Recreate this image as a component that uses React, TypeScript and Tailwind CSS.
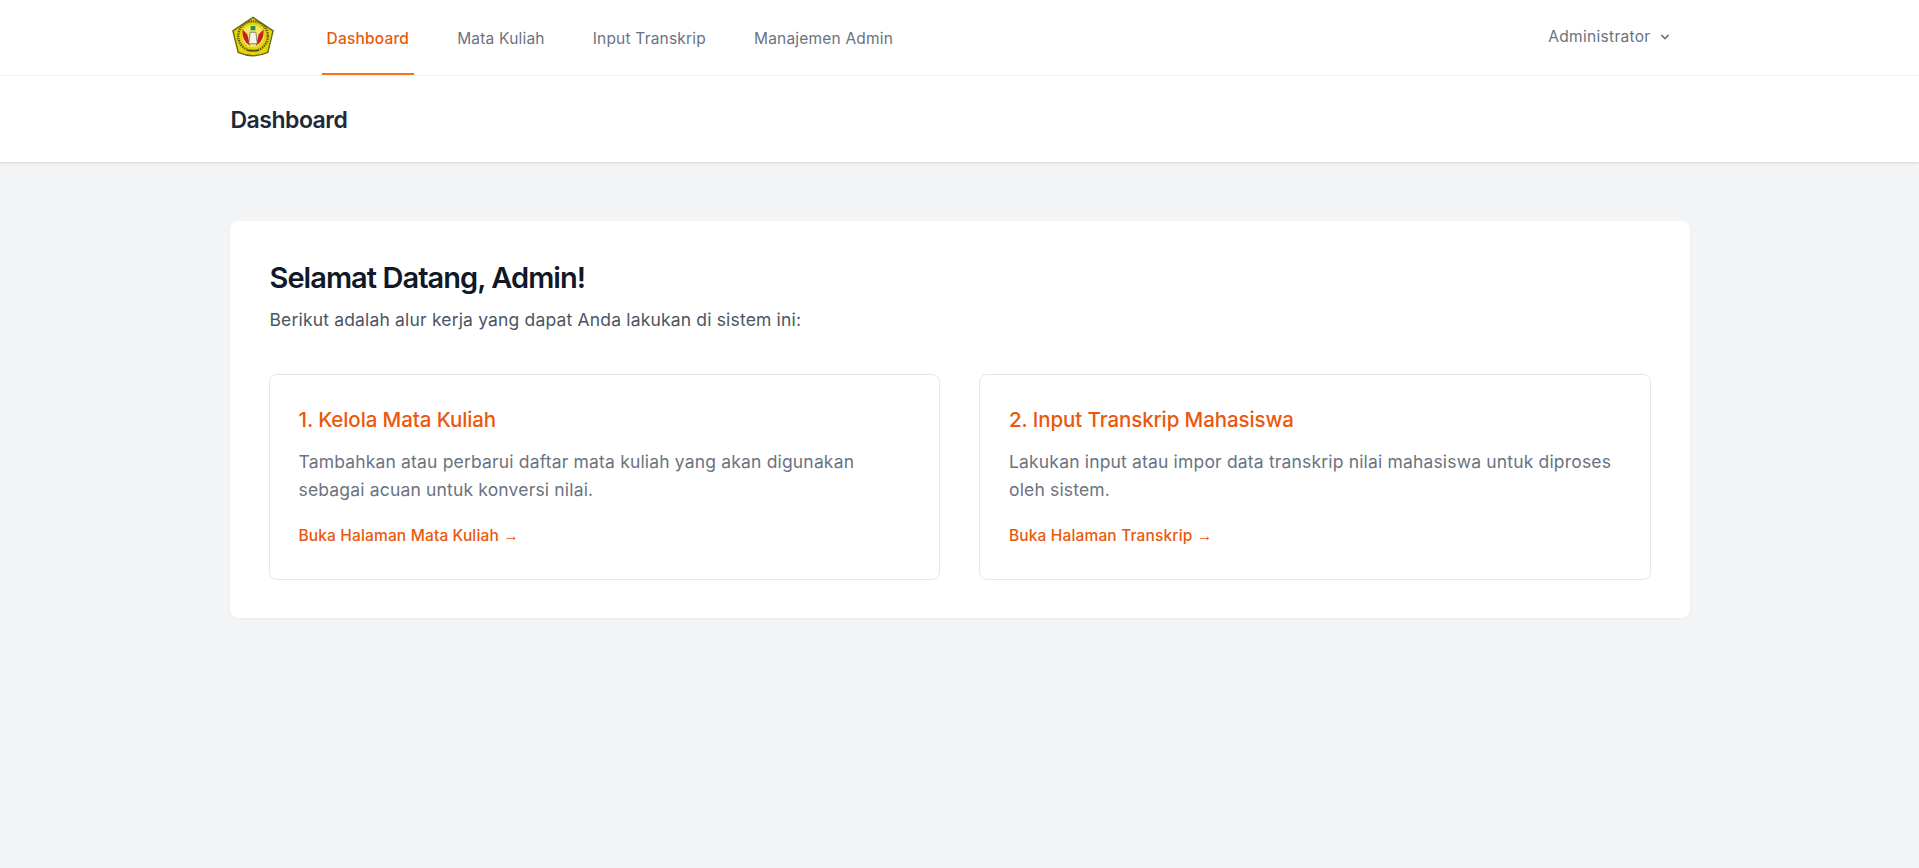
const font = { fontFamily: '"Inter", "Noto Sans", sans-serif' };
const arrowFont = { fontFamily: '"Liberation Sans", sans-serif' };

function Logo() {
  return (
    <svg width="46" height="44" viewBox="0 0 46 46" className="shrink-0">
      <path d="M23 1.5 L44 15.5 L38.5 38 Q23 45 7.5 38 L2 15.5 Z" fill="#e8d20a" stroke="#6b6a10" strokeWidth="1.5" />
      <circle cx="23" cy="21" r="15.5" fill="none" stroke="#57611a" strokeWidth="2.5" strokeDasharray="1.5 1" />
      <circle cx="23" cy="21" r="11.5" fill="#f3e76a" />
      <path d="M12 14 Q11 26 20 31 L17 19 Z" fill="#c8201c" />
      <path d="M34 14 Q35 26 26 31 L29 19 Z" fill="#c8201c" />
      <path d="M20 17 H26 L27.5 29 H18.5 Z" fill="#f7f2e6" stroke="#6f6a55" strokeWidth="0.8" />
      <rect x="20.5" y="10.5" width="5" height="4.5" fill="#2f8f46" />
      <path d="M17 36 H29" stroke="#4b4b12" strokeWidth="1.5" strokeDasharray="1.5 1" />
    </svg>
  );
}

function NavLink({ label, active }: { label: string; active?: boolean }) {
  return (
    <a
      className={`flex h-[75px] items-center border-b-2 px-[5px] pt-[4px] text-[15.5px] font-medium tracking-[0.2px] ${
        active ? "border-[#f97316] text-[#ea580c]" : "border-transparent font-normal text-[#6b7280]"
      }`}
    >
      {label}
    </a>
  );
}

function StepCard({ title, text, link }: { title: string; text: string; link: string }) {
  return (
    <div className="rounded-lg border border-[#e5e7eb] bg-white px-[29px] pt-[31px] pb-[31px]">
      <h3 className="text-[20.5px] leading-[28px] font-medium tracking-[-0.1px] text-[#ea580c]">{title}</h3>
      <p className="mt-[14px] text-[17.5px] leading-[28px] tracking-[0.17px] text-[#6b7280]">{text}</p>
      <a className="mt-[20px] block text-[15.5px] leading-[24px] font-medium tracking-[0.15px] text-[#ea580c]">
        {link} <span style={arrowFont}>→</span>
      </a>
    </div>
  );
}

export default function App() {
  return (
    <div className="min-h-[868px] bg-[#f3f4f6]" style={font}>
      <header className="bg-white shadow">
        <nav className="border-b border-[#f3f4f6]">
          <div className="mx-auto flex h-[75px] w-[1460px] items-center">
            <Logo />
            <div className="ml-[46px] flex gap-[38px]">
              <NavLink label="Dashboard" active />
              <NavLink label="Mata Kuliah" />
              <NavLink label="Input Transkrip" />
              <NavLink label="Manajemen Admin" />
            </div>
            <button className="mr-[17px] ml-auto flex items-center gap-[6px] pb-[2px] text-[15.5px] tracking-[0.3px] text-[#6b7280]">
              Administrator
              <svg width="16" height="16" viewBox="0 0 20 20" fill="currentColor">
                <path d="M5.3 7.3a1 1 0 0 1 1.4 0L10 10.6l3.3-3.3a1 1 0 1 1 1.4 1.4l-4 4a1 1 0 0 1-1.4 0l-4-4a1 1 0 0 1 0-1.4z" />
              </svg>
            </button>
          </div>
        </nav>
        <div className="mx-auto flex h-[86px] w-[1460px] items-center pt-[2px]">
          <h2 className="pl-px text-[23px] font-semibold tracking-[-0.5px] text-[#1f2937]">Dashboard</h2>
        </div>
      </header>
      <main className="mx-auto mt-[59px] w-[1460px] rounded-lg bg-white px-[39px] pt-[39px] pb-[38px] shadow-[0_1px_3px_rgba(0,0,0,0.05)]">
        <h1 className="pl-px text-[29px] leading-[36px] font-semibold tracking-[-0.95px] text-[#111827]">Selamat Datang, Admin!</h1>
        <p className="mt-[10px] pl-px text-[17.5px] leading-[28px] tracking-[0.17px] text-[#4b5563]">
          Berikut adalah alur kerja yang dapat Anda lakukan di sistem ini:
        </p>
        <div className="mt-[40px] grid grid-cols-2 gap-[39px]">
          <StepCard
            title="1. Kelola Mata Kuliah"
            text="Tambahkan atau perbarui daftar mata kuliah yang akan digunakan sebagai acuan untuk konversi nilai."
            link="Buka Halaman Mata Kuliah"
          />
          <StepCard
            title="2. Input Transkrip Mahasiswa"
            text="Lakukan input atau impor data transkrip nilai mahasiswa untuk diproses oleh sistem."
            link="Buka Halaman Transkrip"
          />
        </div>
      </main>
    </div>
  );
}
